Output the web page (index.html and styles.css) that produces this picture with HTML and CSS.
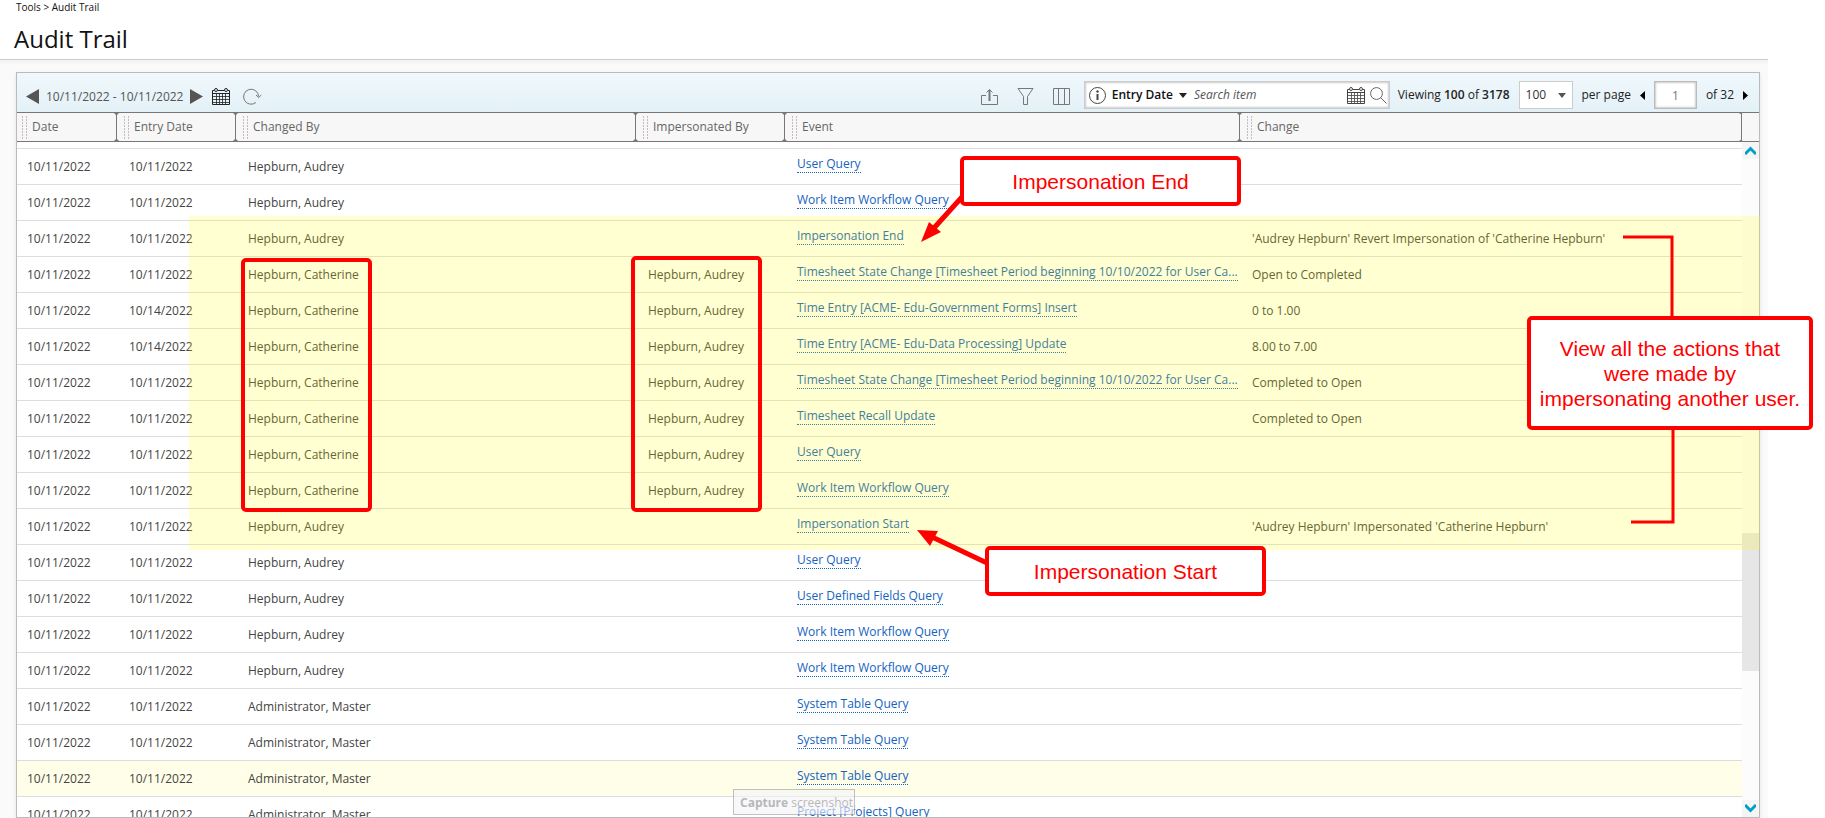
FILE: index.html
```html
<!DOCTYPE html>
<html lang="en">
<head>
    <meta charset="UTF-8">
    <meta name="viewport" content="width=device-width, initial-scale=1.0">
    <title>Audit Trail</title>
    <link rel="stylesheet" href="styles.css">
</head>
<body>
    <!-- shared icons -->
    <svg class="sprite" aria-hidden="true">
        <symbol id="calendar" viewBox="0 0 18 17">
            <path d="M.5 2.5V16.5H17.5V2.5M.5 5.5H17.5M.5 2.5H2M6 2.5H12M16 2.5H17.5" fill="none" stroke="currentColor"/>
            <path d="M1 8.5H17M1 11.5H17M1 14.5H17M4.5 6V16M7.5 6V16M10.5 6V16M13.5 6V16" fill="none" stroke="currentColor" stroke-opacity=".8"/>
            <circle cx="4" cy="2" r="1.5" fill="none" stroke="currentColor"/>
            <circle cx="14" cy="2" r="1.5" fill="none" stroke="currentColor"/>
        </symbol>
        <symbol id="sep" viewBox="0 0 5 28">
            <path d="M2.5 0V28" stroke="#777"/>
            <path d="M0 0H5L3 2H2ZM0 28H5L3 26H2Z" fill="#777"/>
        </symbol>
    </svg>

    <div class="page">
        <header class="page-header">
            <nav class="breadcrumb">Tools &gt; Audit Trail</nav>
            <h1>Audit Trail</h1>
        </header>

        <main class="content">
            <section class="panel">
                <div class="toolbar">
                    <div class="range">
                        <button type="button" aria-label="Previous day"><svg width="13" height="15"><path d="M0 7.5L13 0V15Z" fill="#555"/></svg></button>
                        <span>10/11/2022 - 10/11/2022</span>
                        <button type="button" aria-label="Next day"><svg width="13" height="15"><path d="M13 7.5L0 0V15Z" fill="#555"/></svg></button>
                        <button type="button" class="pick" aria-label="Pick dates"><svg width="18" height="17"><use href="#calendar"/></svg></button>
                        <button type="button" class="refresh" aria-label="Refresh"><svg width="19" height="17" viewBox="0 0 19 17" fill="none" stroke="#777"><path d="M13 14.4A7.5 7.5 0 1 1 15.6 8.5M13 7L15.7 9.6L18.3 7"/></svg></button>
                    </div>
                    <div class="actions">
                        <button type="button" aria-label="Export"><svg width="17" height="17" viewBox="0 0 17 17" fill="none" stroke="#777"><path d="M5 7.5H.5V16.5H16.5V7.5H12"/><path d="M8.5 13V1.5M5.5 4.5L8.5 1.5L11.5 4.5"/><path d="M8.5 3V13" stroke-width="2"/></svg></button>
                        <button type="button" aria-label="Filter"><svg width="17" height="17" viewBox="0 0 17 17" fill="none" stroke="#777"><path d="M1 .5H16L10.5 8.5V16.5H6.5V8.5Z"/></svg></button>
                        <button type="button" aria-label="Columns"><svg width="17" height="17" viewBox="0 0 17 17" fill="none" stroke="#777"><path d="M.5 .5H16.5V16.5H.5ZM5.5 .5V16.5M11.5 .5V16.5"/></svg></button>
                    </div>
                    <div class="search">
                        <button type="button" aria-label="Info"><svg width="17" height="17" viewBox="0 0 17 17"><circle cx="8.5" cy="8.5" r="8" fill="none" stroke="#444"/><path d="M8.5 7V13" stroke="#444" stroke-width="2"/><circle cx="8.5" cy="4.5" r="1.2" fill="#444"/></svg></button>
                        <button type="button" class="field">Entry Date <svg width="8" height="5"><path d="M0 0H8L4 5Z" fill="#222"/></svg></button>
                        <input type="text" placeholder="Search item" aria-label="Search item">
                        <button type="button" class="search-date" aria-label="Pick a date"><svg width="18" height="17"><use href="#calendar"/></svg></button>
                        <button type="button" aria-label="Search"><svg width="17" height="17" viewBox="0 0 17 17" fill="none" stroke="#666"><circle cx="6.5" cy="6.5" r="5.9"/><path d="M10.7 10.7L16.5 16.5"/></svg></button>
                    </div>
                    <div class="pager">
                        <span>Viewing <b>100</b> of <b>3178</b></span>
                        <span class="size">
                            <select id="size" aria-label="Rows"><option>100</option></select>
                            <svg width="8" height="5"><path d="M0 0H8L4 5Z" fill="#555"/></svg>
                        </span>
                        <label for="size">per page</label>
                        <button type="button" aria-label="Previous page"><svg width="5" height="9"><path d="M5 0V9L0 4.5Z"/></svg></button>
                        <input type="text" id="pageno" value="1" aria-label="Page">
                        <label for="pageno">of 32</label>
                        <button type="button" aria-label="Next page"><svg width="5" height="9"><path d="M0 0V9L5 4.5Z"/></svg></button>
                    </div>
                </div>

                <div class="grid">
                    <div class="grid-view">
                        <table>
                            <colgroup>
                                <col class="c-date"><col class="c-entry"><col class="c-changed"><col class="c-imp"><col class="c-event"><col>
                            </colgroup>
                            <thead>
                                <tr>
                                    <th><div class="head"><i></i><span>Date</span><svg width="5" height="28"><use href="#sep"/></svg></div></th>
                                    <th><div class="head"><i></i><span>Entry Date</span><svg width="5" height="28"><use href="#sep"/></svg></div></th>
                                    <th><div class="head"><i></i><span>Changed By</span><svg width="5" height="28"><use href="#sep"/></svg></div></th>
                                    <th><div class="head"><i></i><span>Impersonated By</span><svg width="5" height="28"><use href="#sep"/></svg></div></th>
                                    <th><div class="head"><i></i><span>Event</span><svg width="5" height="28"><use href="#sep"/></svg></div></th>
                                    <th><div class="head last"><i></i><span>Change</span><svg width="3" height="28" viewBox="0 0 3 28"><path d="M2.5 0V28" stroke="#777"/><path d="M0 0H3V2ZM0 28H3V26Z" fill="#777"/></svg></div></th>
                                </tr>
                            </thead>
                            <tbody>
                                <tr class="cut"><td colspan="6"></td></tr>
                                <tr><td>10/11/2022</td><td>10/11/2022</td><td>Hepburn, Audrey</td><td></td><td><a href="#">User Query</a></td><td></td></tr>
                                <tr><td>10/11/2022</td><td>10/11/2022</td><td>Hepburn, Audrey</td><td></td><td><a href="#">Work Item Workflow Query</a></td><td></td></tr>
                                <tr><td>10/11/2022</td><td>10/11/2022</td><td>Hepburn, Audrey</td><td></td><td><a href="#">Impersonation End</a></td><td>'Audrey Hepburn' Revert Impersonation of 'Catherine Hepburn'</td></tr>
                                <tr><td>10/11/2022</td><td>10/11/2022</td><td>Hepburn, Catherine</td><td>Hepburn, Audrey</td><td><a href="#">Timesheet State Change [Timesheet Period beginning 10/10/2022 for User Ca...</a></td><td>Open to Completed</td></tr>
                                <tr><td>10/11/2022</td><td>10/14/2022</td><td>Hepburn, Catherine</td><td>Hepburn, Audrey</td><td><a href="#">Time Entry [ACME- Edu-Government Forms] Insert</a></td><td>0 to 1.00</td></tr>
                                <tr><td>10/11/2022</td><td>10/14/2022</td><td>Hepburn, Catherine</td><td>Hepburn, Audrey</td><td><a href="#">Time Entry [ACME- Edu-Data Processing] Update</a></td><td>8.00 to 7.00</td></tr>
                                <tr><td>10/11/2022</td><td>10/11/2022</td><td>Hepburn, Catherine</td><td>Hepburn, Audrey</td><td><a href="#">Timesheet State Change [Timesheet Period beginning 10/10/2022 for User Ca...</a></td><td>Completed to Open</td></tr>
                                <tr><td>10/11/2022</td><td>10/11/2022</td><td>Hepburn, Catherine</td><td>Hepburn, Audrey</td><td><a href="#">Timesheet Recall Update</a></td><td>Completed to Open</td></tr>
                                <tr><td>10/11/2022</td><td>10/11/2022</td><td>Hepburn, Catherine</td><td>Hepburn, Audrey</td><td><a href="#">User Query</a></td><td></td></tr>
                                <tr><td>10/11/2022</td><td>10/11/2022</td><td>Hepburn, Catherine</td><td>Hepburn, Audrey</td><td><a href="#">Work Item Workflow Query</a></td><td></td></tr>
                                <tr><td>10/11/2022</td><td>10/11/2022</td><td>Hepburn, Audrey</td><td></td><td><a href="#">Impersonation Start</a></td><td>'Audrey Hepburn' Impersonated 'Catherine Hepburn'</td></tr>
                                <tr><td>10/11/2022</td><td>10/11/2022</td><td>Hepburn, Audrey</td><td></td><td><a href="#">User Query</a></td><td></td></tr>
                                <tr><td>10/11/2022</td><td>10/11/2022</td><td>Hepburn, Audrey</td><td></td><td><a href="#">User Defined Fields Query</a></td><td></td></tr>
                                <tr><td>10/11/2022</td><td>10/11/2022</td><td>Hepburn, Audrey</td><td></td><td><a href="#">Work Item Workflow Query</a></td><td></td></tr>
                                <tr><td>10/11/2022</td><td>10/11/2022</td><td>Hepburn, Audrey</td><td></td><td><a href="#">Work Item Workflow Query</a></td><td></td></tr>
                                <tr><td>10/11/2022</td><td>10/11/2022</td><td>Administrator, Master</td><td></td><td><a href="#">System Table Query</a></td><td></td></tr>
                                <tr><td>10/11/2022</td><td>10/11/2022</td><td>Administrator, Master</td><td></td><td><a href="#">System Table Query</a></td><td></td></tr>
                                <tr class="hover"><td>10/11/2022</td><td>10/11/2022</td><td>Administrator, Master</td><td></td><td><a href="#">System Table Query</a></td><td></td></tr>
                                <tr><td>10/11/2022</td><td>10/11/2022</td><td>Administrator, Master</td><td></td><td><a href="#">Project [Projects] Query</a></td><td></td></tr>
                            </tbody>
                        </table>
                    </div>
                    <div class="scroll">
                        <div class="scroll-head"></div>
                        <button type="button" aria-label="Scroll up"><svg width="11" height="9" viewBox="0 0 11 9"><path d="M0 8L5.5 2.5L11 8" fill="none" stroke="#00a0c6" stroke-width="3"/></svg></button>
                        <div class="track"><div class="thumb"></div></div>
                        <button type="button" aria-label="Scroll down"><svg width="11" height="9" viewBox="0 0 11 9"><path d="M0 1L5.5 6.5L11 1" fill="none" stroke="#00a0c6" stroke-width="3"/></svg></button>
                    </div>
                </div>
            </section>
        </main>
    </div>

    <div class="capture"><b>Capture</b> screenshot.</div>

    <!-- callouts over the table -->
    <div class="notes">
        <div class="marker"></div>
        <div class="frame frame-changed"></div>
        <div class="frame frame-imp"></div>
        <svg class="lines" width="1825" height="818" fill="none" stroke="#f00">
            <path d="M962 197L934 228M987 563L930 536" stroke-width="5"/>
            <path d="M921 242L929 222L941 232ZM917 530L938 531L930 546Z" fill="#f00" stroke="none"/>
            <path d="M1623 237H1672V318M1673 428V522H1631" stroke-width="3"/>
        </svg>
        <div class="note note-end">Impersonation End</div>
        <div class="note note-start">Impersonation Start</div>
        <div class="note note-view">View all the actions that<br>were made by<br>impersonating another user.</div>
    </div>
</body>
</html>
```
FILE: styles.css
```css
* { box-sizing: border-box; }
body { margin: 0; height: 100vh; overflow: hidden; position: relative; background: #fff; color: #444; font: 12px/16px "Open Sans", Arial, sans-serif; }
button { padding: 0; border: 0; background: none; color: inherit; font: inherit; cursor: pointer; }
svg { display: block; }
.sprite { position: absolute; width: 0; height: 0; }

.page { height: 100vh; margin-right: 57px; display: flex; flex-direction: column; }
.page-header { padding: 0 14px 8px; border-bottom: 1px solid #ccc; color: #111; }
.breadcrumb { padding: 0 2px; font-size: 10px; line-height: 15px; }
h1 { margin: 12px 0 0; font-size: 24px; font-weight: 400; line-height: 24px; }
.content { flex: 1; min-height: 0; padding: 12px 8px 0 16px; background: linear-gradient(#f2f2f2, #fafafa 5px); }
.panel { height: 100%; display: flex; flex-direction: column; border: 1px solid #bbb; background: #fff; box-shadow: 0 2px 4px rgba(0,0,0,0.1); overflow: hidden; }

.toolbar { display: flex; align-items: center; height: 39px; padding: 5px 11px 0 9px; background: linear-gradient(#f0f8fc, #e3f1f7); }
.range { display: flex; align-items: center; flex: 1; gap: 7px; padding-top: 3px; color: #555; }
.pick { margin-left: 2px; color: #222; }
.refresh { margin-left: 6px; }
.actions { display: flex; gap: 19px; padding-top: 2px; margin-right: 14px; }
.search { display: flex; align-items: center; width: 306px; height: 28px; padding: 0 2px 0 4px; border: 1px solid #ccc; background: #fff; box-shadow: inset 0 0 2px 1px #ccc; }
.search .field { display: flex; align-items: center; gap: 6px; margin-left: 6px; color: #111; font-weight: 600; }
.search input { flex: 1; min-width: 0; margin-left: 6px; padding: 0 1px; border: 0; background: none; font: italic 12px/16px "Open Sans", Arial, sans-serif; }
.search input::placeholder { color: #555; }
.search-date { margin-right: 5px; }
.pager { display: flex; align-items: center; gap: 9px; margin-left: 8px; color: #222; }
.pager b { font-weight: 600; }
.pager input { width: 43px; height: 28px; padding: 0; border: 1px solid #bbb; background: #fff; box-shadow: inset 0 0 2px 1px #ccc; color: #777; font: inherit; text-align: center; }
.size { position: relative; }
.size select { appearance: none; display: block; width: 54px; height: 28px; padding: 0 6px; border: 1px solid #ccc; border-radius: 0; background: #fff; color: #333; font: inherit; }
.size svg { position: absolute; right: 7px; top: 12px; pointer-events: none; }

.grid { flex: 1; min-height: 0; display: flex; }
.grid-view { flex: 1; min-width: 0; overflow: hidden; }
table { width: 100%; table-layout: fixed; border-collapse: separate; border-spacing: 0; }
.c-date { width: 102px; }
.c-entry { width: 119px; }
.c-changed { width: 400px; }
.c-imp { width: 149px; }
.c-event { width: 455px; }
th { height: 30px; padding: 0; border: solid #777; border-width: 1px 0; background: #f7f7f7; color: #666; font-weight: 400; text-align: left; }
.head { display: flex; align-items: center; height: 28px; padding-left: 5px; }
.head i { width: 5px; height: 24px; margin-right: 5px; background: repeating-linear-gradient(#f7f7f7 0 1px, transparent 1px 3px), linear-gradient(90deg, #c8b8c8 1px, transparent 1px 4px, #c8b8c8 4px); }
.head span { flex: 1; }
td { height: 36px; padding: 0 0 0 10px; border-bottom: 1px solid #ddd; white-space: nowrap; }
.cut td { height: 7px; padding: 0; }
td a { display: inline-block; vertical-align: middle; margin-bottom: 6px; border-bottom: 1px dotted #1463c0; color: #1463c0; line-height: 17px; text-decoration: none; }
.hover td { background: #fffee8; }

.scroll { width: 17px; display: flex; flex-direction: column; background: #fcfcfc; }
.scroll-head { height: 30px; border: solid #777; border-width: 1px 0; background: #f7f7f7; }
.scroll button { display: flex; align-items: center; justify-content: center; height: 17px; background: #f5f5f5; }
.track { flex: 1; padding-top: 374px; }
.thumb { height: 138px; background: #e6e6e6; }

.capture { position: absolute; left: 733px; top: 789px; width: 122px; height: 26px; padding: 5px 6px; border: 1px solid #999; background: #f4f5fa; color: #888; white-space: nowrap; opacity: 0.6; }

.notes { position: absolute; inset: 0; pointer-events: none; }
.marker { position: absolute; left: 189px; top: 216px; width: 1571px; height: 334px; background: rgba(255,255,0,0.18); }
.frame { position: absolute; width: 131px; border: 4px solid #f00; border-radius: 5px; }
.frame-changed { left: 241px; top: 258px; height: 254px; }
.frame-imp { left: 631px; top: 256px; height: 256px; }
.lines { position: absolute; left: 0; top: 0; }
.note { position: absolute; display: flex; align-items: center; justify-content: center; width: 281px; height: 50px; border: 4px solid #f00; border-radius: 5px; background: #fff; color: #f00; font: 21px/25px "Liberation Sans", Arial, sans-serif; text-align: center; }
.note-end { left: 960px; top: 156px; }
.note-start { left: 985px; top: 546px; }
.note-view { left: 1527px; top: 316px; width: 286px; height: 114px; }
```
